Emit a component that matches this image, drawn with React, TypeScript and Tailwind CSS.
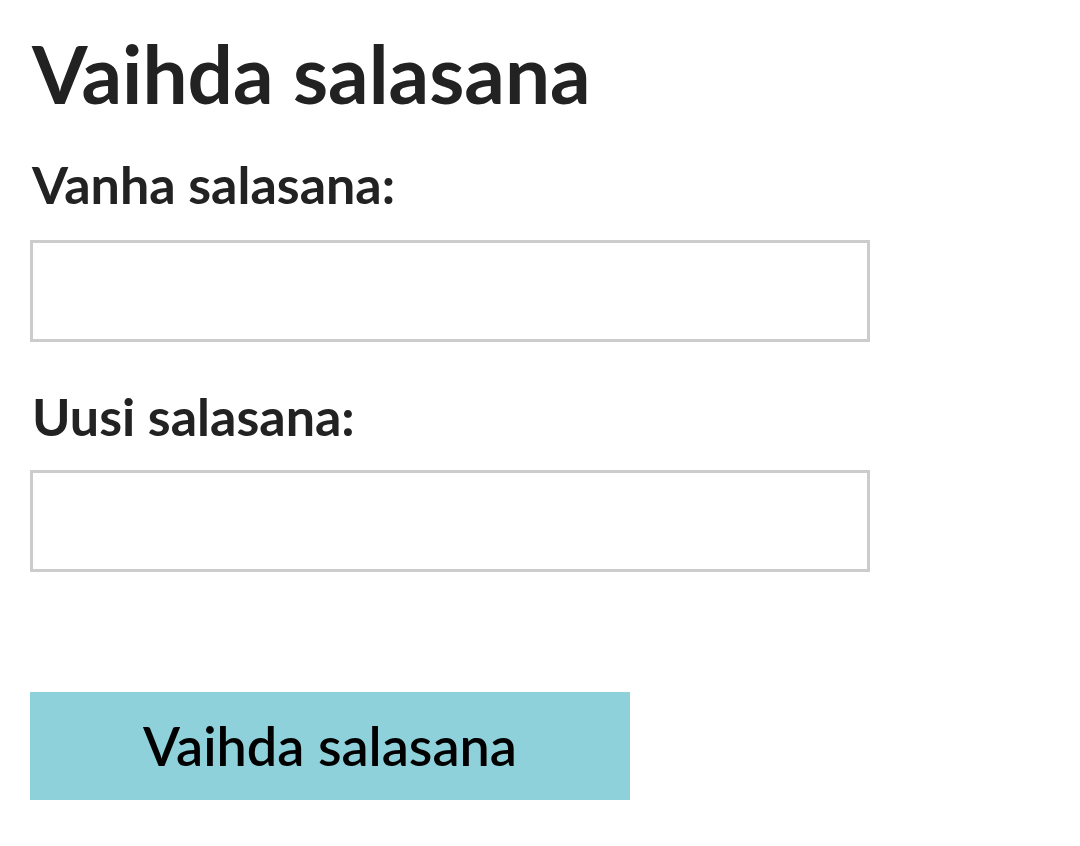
export default function App() {
  return (
    <div className="min-h-[846px] bg-white pl-[30px] pt-[33px] text-[#222222] font-['Lato','Liberation_Sans',sans-serif]">
      <h1 className="text-[80px] font-bold leading-[80px] pl-[2px]">Vaihda salasana</h1>
      <form className="flex flex-col">
        <label className="mt-[45px] text-[52px] font-bold leading-[52px] pl-[2px]">Vanha salasana:</label>
        <input type="password" className="mt-[30px] h-[102px] w-[840px] border-[3px] border-[#cccccc] bg-white outline-none" />
        <label className="mt-[48px] text-[52px] font-bold leading-[52px] pl-[2px]">Uusi salasana:</label>
        <input type="password" className="mt-[28px] h-[102px] w-[840px] border-[3px] border-[#cccccc] bg-white outline-none" />
        <button
          type="button"
          className="mt-[120px] h-[108px] w-[600px] bg-[#8fd1da] text-[54px] font-semibold text-black leading-none"
        >
          Vaihda salasana
        </button>
      </form>
    </div>
  );
}
